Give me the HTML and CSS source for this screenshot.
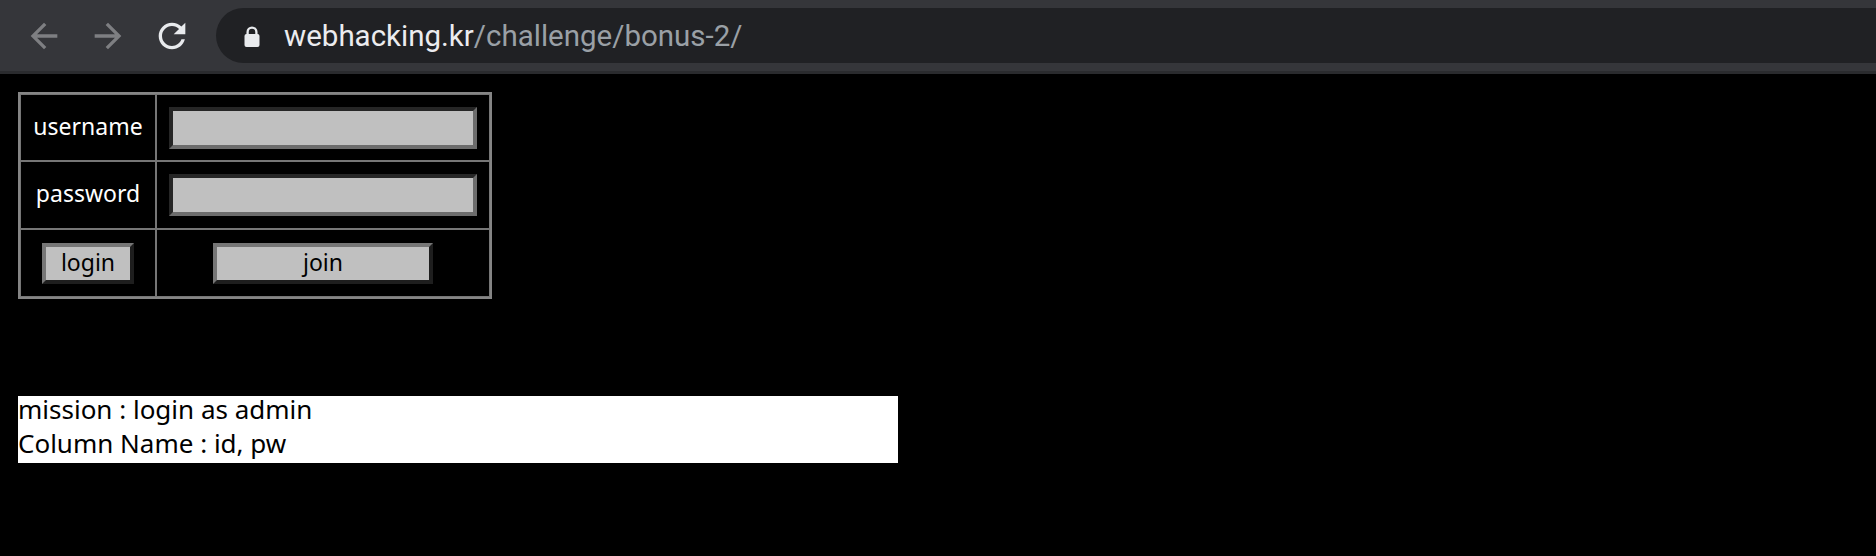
FILE: index.html
```html
<!DOCTYPE html>
<html>
<head>
<meta charset="utf-8">
<title>webhacking.kr bonus-2</title>
<link rel="stylesheet" href="styles.css">
</head>
<body>
<div class="toolbar">
  <svg class="nav-icon back" viewBox="0 0 24 24"><path d="M20 11H7.83l5.59-5.59L12 4l-8 8 8 8 1.41-1.41L7.83 13H20v-2z"/></svg>
  <svg class="nav-icon fwd" viewBox="0 0 24 24"><path d="M4 11h12.17l-5.59-5.59L12 4l8 8-8 8-1.41-1.41L16.17 13H4v-2z"/></svg>
  <svg class="nav-icon reload" viewBox="0 0 24 24"><path d="M17.65 6.35C16.2 4.9 14.21 4 12 4c-4.42 0-7.99 3.58-7.99 8s3.57 8 7.99 8c3.73 0 6.84-2.55 7.73-6h-2.08c-.82 2.33-3.04 4-5.65 4-3.31 0-6-2.69-6-6s2.69-6 6-6c1.66 0 3.14.69 4.22 1.78L13 11h7V4l-2.35 2.35z"/></svg>
  <div class="omnibox">
    <svg class="lock" viewBox="0 0 16 21"><path class="shackle" d="M3.6 9V6a4.4 4.4 0 0 1 8.8 0v3"/><rect x="0.5" y="8" width="15" height="13" rx="2"/></svg>
    <span class="host">webhacking.kr</span><span class="path">/challenge/bonus-2/</span>
  </div>
</div>
<main class="page">
  <table class="login">
    <tr>
      <td class="label"><span class="lbl">username</span></td>
      <td class="field"><input class="txt" type="text"></td>
    </tr>
    <tr>
      <td class="label"><span class="lbl">password</span></td>
      <td class="field"><input class="txt" type="password"></td>
    </tr>
    <tr>
      <td class="label"><button class="btn btn-login">login</button></td>
      <td class="field"><button class="btn btn-join">join</button></td>
    </tr>
  </table>
  <div class="mission"><p class="mission-text">mission : login as admin<br>Column Name : id, pw</p></div>
</main>
</body>
</html>
```
FILE: styles.css
```css
html, body {
  margin: 0;
  padding: 0;
  background: #000;
  overflow: hidden;
}

.toolbar {
  height: 71px;
  background: #35363a;
  border-bottom: 3px solid #2a2b2e;
  display: flex;
  align-items: center;
  padding-left: 24px;
  overflow: hidden;
}

.nav-icon {
  width: 40px;
  height: 40px;
  flex: none;
}
.back { fill: #7e7f82; }
.fwd { fill: #7e7f82; margin-left: 24px; }
.reload { fill: #e8eaed; margin-left: 24px; }

.omnibox {
  flex: 1;
  margin-left: 24px;
  margin-right: -60px;
  height: 55px;
  border-radius: 28px;
  background: #202124;
  display: flex;
  align-items: center;
  padding-left: 28px;
  font-family: Roboto, "Liberation Sans", sans-serif;
  font-size: 29.5px;
}
.lock {
  width: 16px;
  height: 21px;
  flex: none;
  margin-right: 24px;
  margin-top: 1px;
}
.lock rect { fill: #e8eaed; }
.lock .shackle { fill: none; stroke: #e8eaed; stroke-width: 2.3; }
.host { color: #ececef; }
.path { color: #9aa0a6; }

.page {
  padding: 18px;
}

.login {
  box-sizing: border-box;
  width: 474px;
  border-collapse: separate;
  border-spacing: 0;
  border: 2px solid #858585;
  table-layout: fixed;
  font-family: "Noto Sans", "Open Sans", sans-serif;
  font-size: 23px;
  color: #fff;
}
.login td {
  box-sizing: border-box;
  border: 1px solid #767676;
  padding: 0;
  text-align: center;
  vertical-align: middle;
}
.login tr:first-child td { height: 67px; }
.login tr td { height: 68px; }
.login td.label { width: 136px; }
.lbl {
  display: inline-block;
  margin-bottom: 4px;
}

.txt {
  display: block;
  box-sizing: border-box;
  width: 308px;
  height: 42px;
  margin: 0 auto;
  background: #c0c0c0;
  border-style: solid;
  border-width: 4px;
  border-color: #262626 #6c6c6c #6c6c6c #262626;
  padding: 0 4px;
  outline: none;
}

.btn {
  box-sizing: border-box;
  height: 41px;
  background: #c0c0c0;
  border-style: solid;
  border-width: 4px;
  border-color: #767676 #1e1e1e #1e1e1e #767676;
  font-family: "Noto Sans", "Open Sans", sans-serif;
  font-size: 23px;
  color: #000;
  padding: 0 0 2px;
  line-height: 29px;
  vertical-align: middle;
}
.btn-login { width: 92px; }
.btn-join { width: 220px; }

.mission {
  display: flow-root;
  margin-top: 97px;
  width: 880px;
  height: 67px;
  background: #fff;
  color: #000;
  font-family: "Noto Sans", "Open Sans", sans-serif;
  font-size: 26px;
  line-height: 33.5px;
}
.mission-text {
  margin: -3px 0 0;
}
```
